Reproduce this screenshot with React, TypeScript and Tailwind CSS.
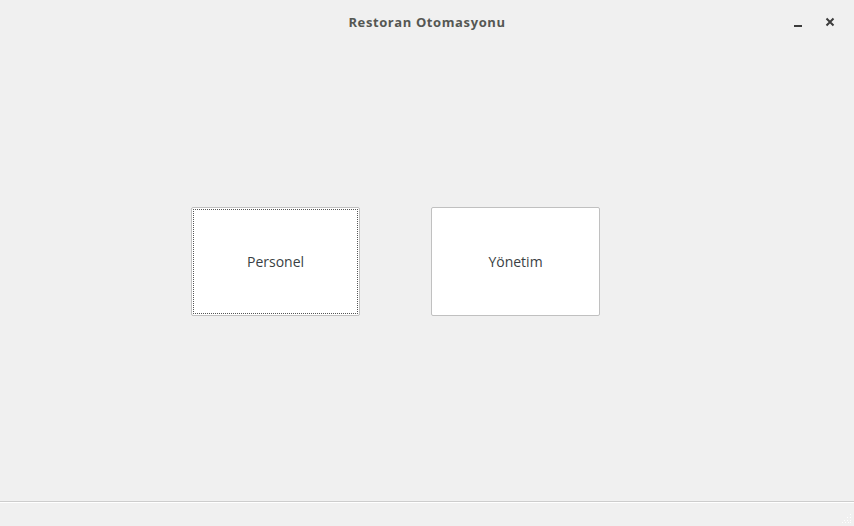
export default function App() {
  return (
    <div className="w-[854px] h-[526px] bg-[#f0f0f0] flex flex-col overflow-hidden" style={{ fontFamily: '"Open Sans", "Noto Sans", sans-serif' }}>
      {/* Title bar */}
      <header className="relative h-[46px] flex items-center justify-center shrink-0">
        <span className="text-[13px] font-bold text-[#555753] tracking-[0.6px] -mt-[1px]">Restoran Otomasyonu</span>
        <div className="absolute right-[19px] top-[17px] flex items-center gap-[22px]">
          <svg width="10" height="10" viewBox="0 0 10 10">
            <rect x="1" y="8" width="8" height="2" fill="#3c3c3c" />
          </svg>
          <svg width="10" height="10" viewBox="0 0 10 10">
            <path d="M1.5 1.5 L8.5 8.5 M8.5 1.5 L1.5 8.5" stroke="#3c3c3c" strokeWidth="2" />
          </svg>
        </div>
      </header>

      {/* Content */}
      <main className="flex-1 flex items-start pl-[191px] pt-[161px] gap-[71px]">
        <button className="w-[169px] h-[109px] bg-white border border-[#c0c0c0] rounded-[2px] p-[1px] text-[14px] text-[#3a3f44]">
          <div className="w-full h-full border border-dotted border-[#555] flex items-center justify-center">
            Personel
          </div>
        </button>
        <button className="w-[169px] h-[109px] bg-white border border-[#c0c0c0] rounded-[2px] text-[14px] text-[#3a3f44] flex items-center justify-center">
          Yönetim
        </button>
      </main>

      {/* Status bar */}
      <footer className="relative h-[25px] shrink-0 border-t border-[#cdcdcd]">
        <div className="h-px bg-white" />
        <svg className="absolute right-[2px] bottom-[2px]" width="10" height="10" viewBox="0 0 10 10">
          {[
            [8, 0], [5, 3], [8, 3], [2, 6], [5, 6], [8, 6], [0, 8], [3, 8], [6, 8], [8, 8],
          ].map(([x, y], i) => (
            <rect key={i} x={x} y={y} width="1" height="1" fill="#ffffff" />
          ))}
        </svg>
      </footer>
    </div>
  );
}
